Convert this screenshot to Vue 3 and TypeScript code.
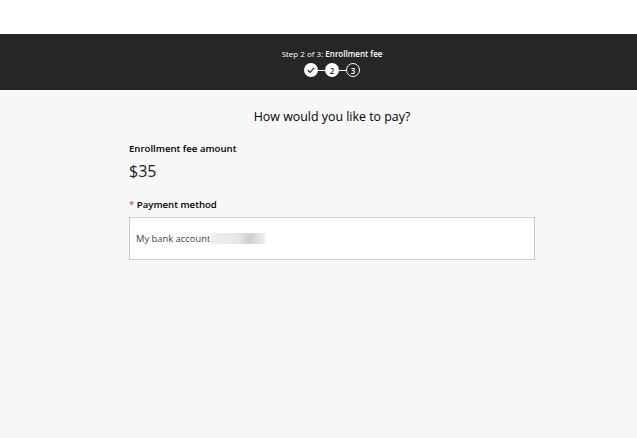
<script setup lang="ts">
const title = 'How would you like to pay?'
</script>

<template>
  <div class="page">
    <div class="topbar"></div>
    <header class="stepper">
      <div class="step-text">Step 2 of 3: <strong>Enrollment fee</strong></div>
      <div class="steps">
        <span class="dot filled">
          <svg width="10" height="10" viewBox="0 0 10 10"><path d="M1.8 5.2 4 7.3 8.2 2.8" fill="none" stroke="#262626" stroke-width="1.2" /></svg>
        </span>
        <span class="line"></span>
        <span class="dot filled">2</span>
        <span class="line"></span>
        <span class="dot outline">3</span>
      </div>
    </header>
    <main class="content">
      <h1 class="title">{{ title }}</h1>
      <div class="form">
        <div class="label">Enrollment fee amount</div>
        <div class="amount">$35</div>
        <div class="label method"><span class="req">*</span> Payment method</div>
        <div class="box">
          <span>My bank account</span>
          <span class="blur"></span>
        </div>
      </div>
    </main>
  </div>
</template>

<style>
html, body { margin: 0; padding: 0; }
</style>

<style scoped>
.page {
  width: 637px;
  height: 438px;
  display: flex;
  flex-direction: column;
  background: #f8f8f8;
  font-family: "Open Sans", "Liberation Sans", sans-serif;
  color: #111;
  overflow: hidden;
}
.topbar { height: 34px; background: #fff; }
.stepper {
  height: 56px;
  background: #262626;
  color: #fff;
  display: flex;
  flex-direction: column;
  align-items: center;
  padding: 14px 0 0 27px;
  box-sizing: border-box;
}
.step-text { font-size: 8px; line-height: 11px; font-weight: 500; }
.step-text strong { font-weight: 600; }
.steps { display: flex; align-items: center; margin-top: 4px; }
.dot {
  width: 14px;
  height: 14px;
  border-radius: 50%;
  box-sizing: border-box;
  display: flex;
  align-items: center;
  justify-content: center;
  font-size: 8px;
  font-weight: 600;
}
.filled { background: #fff; color: #262626; }
.outline { border: 1px solid #fff; color: #fff; }
.line { width: 7px; height: 1px; background: #fff; }
.content {
  display: flex;
  flex-direction: column;
  align-items: center;
  padding-left: 27px;
}
.title {
  margin: 18px 0 0;
  font-size: 12.4px;
  line-height: 17px;
  font-weight: 500;
  color: #000;
}
.form { width: 406px; margin-top: 17px; }
.label { font-size: 9.6px; line-height: 13px; font-weight: 600; color: #000; }
.amount { font-size: 16px; line-height: 22px; margin-top: 5px; color: #222; }
.method { margin-top: 16px; }
.req { color: #c0392b; font-weight: 400; }
.box {
  height: 43px;
  margin-top: 6px;
  box-sizing: border-box;
  background: #fff;
  border: 1px solid #ccc;
  display: flex;
  align-items: center;
  padding-left: 6px;
  font-size: 9.4px;
  color: #444;
}
.blur {
  width: 54px;
  height: 11px;
  margin-left: 1px;
  background: linear-gradient(90deg, #efefef, #e8e8e8 50%, #cfcfcf 72%, #efefef 100%);
}
</style>
